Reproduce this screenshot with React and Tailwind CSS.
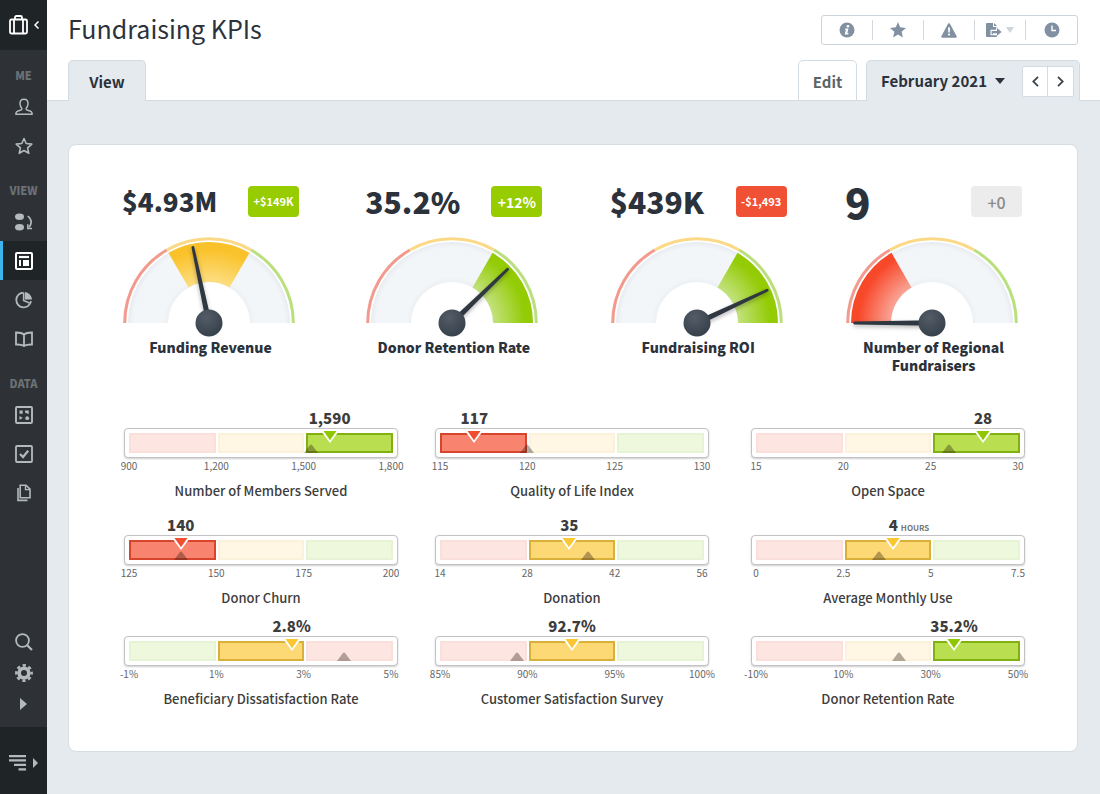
import {useId} from "react";

const gauges = [
  {
    title: "Funding Revenue",
    value: "$4.93M",
    valueSize: "text-[26px]",
    change: "+$149K",
    badge: "bg-[#96cc00] text-white text-[11px] font-bold",
    segment: 1,
    angle: 102,
  },
  {
    title: "Donor Retention Rate",
    value: "35.2%",
    valueSize: "text-[30px]",
    change: "+12%",
    badge: "bg-[#96cc00] text-white text-sm font-bold",
    segment: 2,
    angle: 44,
  },
  {
    title: "Fundraising ROI",
    value: "$439K",
    valueSize: "text-[30px]",
    change: "-$1,493",
    badge: "bg-[#f05033] text-white text-[11px] font-bold",
    segment: 2,
    angle: 25,
  },
  {
    title: "Number of Regional Fundraisers",
    value: "9",
    valueSize: "text-[42px]",
    change: "+0",
    badge: "bg-[#ececec] text-[#8a8a8a] text-base font-medium",
    segment: 0,
    angle: 180,
  },
];

// positions are percentages of the track
const bullets = [
  {title: "Number of Members Served", value: "1,590", at: 76, prev: 69, active: 2, ticks: ["900", "1,200", "1,500", "1,800"]},
  {title: "Quality of Life Index", value: "117", at: 13, prev: 33, active: 0, ticks: ["115", "120", "125", "130"]},
  {title: "Open Space", value: "28", at: 86, prev: 73, active: 2, ticks: ["15", "20", "25", "30"]},
  {title: "Donor Churn", value: "140", at: 19.6, prev: 19.6, active: 0, ticks: ["125", "150", "175", "200"]},
  {title: "Donation", value: "35", at: 49, prev: 56, active: 1, ticks: ["14", "28", "42", "56"]},
  {title: "Average Monthly Use", value: "4", unit: "HOURS", at: 52, prev: 46.6, active: 1, ticks: ["0", "2.5", "5", "7.5"]},
  {title: "Beneficiary Dissatisfaction Rate", value: "2.8%", at: 61.6, prev: 81.3, active: 1, reverse: true, ticks: ["-1%", "1%", "3%", "5%"]},
  {title: "Customer Satisfaction Survey", value: "92.7%", at: 50, prev: 29, active: 1, ticks: ["85%", "90%", "95%", "100%"]},
  {title: "Donor Retention Rate", value: "35.2%", at: 75, prev: 54, active: 2, ticks: ["-10%", "10%", "30%", "50%"]},
];

const tones = {
  red: {
    idle: "bg-[#fde6e2] border-[#fbdfdb]",
    active: "bg-[#f8836e] border-[#d6452c]",
    marker: "#f04e30",
  },
  yellow: {
    idle: "bg-[#fff6e3] border-[#fcf2dc]",
    active: "bg-[#fcd975] border-[#d8b03a]",
    marker: "#fbc62f",
  },
  green: {
    idle: "bg-[#edf8dd] border-[#e6f3d5]",
    active: "bg-[#b9de50] border-[#82b010]",
    marker: "#8fc800",
  },
};

const gaugeColors = [
  {light: "#f9a99b", full: "#f8482a", ring: "#f39a8e"},
  {light: "#fddf86", full: "#fac22a", ring: "#fbd987"},
  {light: "#c5e384", full: "#93cb04", ring: "#b9df7e"},
];

const CX = 87;
const CY = 87;

const point = (r, deg) => {
  const a = (deg * Math.PI) / 180;
  return `${(CX + r * Math.cos(a)).toFixed(2)} ${(CY - r * Math.sin(a)).toFixed(2)}`;
};

const arc = (r, from, to) => `M${point(r, from)}A${r} ${r} 0 0 1 ${point(r, to)}`;

const wedge = (r1, r2, from, to) =>
  `M${point(r2, from)}A${r2} ${r2} 0 0 1 ${point(r2, to)}L${point(r1, to)}A${r1} ${r1} 0 0 0 ${point(r1, from)}Z`;

function GaugeDial({segment, angle}) {
  const id = useId();
  const color = gaugeColors[segment];
  const from = 180 - segment * 60;

  return (
    <svg width="174" height="101" viewBox="0 0 174 101" aria-hidden="true">
      <defs>
        <radialGradient id={`${id}fill`} gradientUnits="userSpaceOnUse" cx={CX} cy={CY} r="82">
          <stop offset="0.48" stopColor={color.light} />
          <stop offset="0.9" stopColor={color.full} />
        </radialGradient>
        <radialGradient id={`${id}base`} gradientUnits="userSpaceOnUse" cx={CX} cy={CY} r="82">
          <stop offset="0.5" stopColor="#ecf0f3" />
          <stop offset="0.56" stopColor="#f2f6f9" />
          <stop offset="0.92" stopColor="#f2f6f9" />
          <stop offset="1" stopColor="#e6eaee" />
        </radialGradient>
        <radialGradient id={`${id}hub`} cx="0.4" cy="0.3" r="0.7">
          <stop offset="0" stopColor="#545d67" />
          <stop offset="1" stopColor="#37414b" />
        </radialGradient>
      </defs>
      {gaugeColors.map((c, i) => (
        <path
          key={c.full}
          d={arc(84.3, 180 - i * 60, 120 - i * 60)}
          fill="none"
          stroke={c.ring}
          strokeWidth="3"
        />
      ))}
      <path d={wedge(41, 81, 180, 0)} fill={`url(#${id}base)`} />
      <path d={wedge(41, 81, from, from - 60)} fill={`url(#${id}fill)`} />
      <g className="drop-shadow-[0_2px_2px_rgba(0,0,0,0.3)]">
        <path
          d="M87 84.2L165 85.6Q166.6 87 165 88.4L87 89.8Z"
          fill="#2f3841"
          transform={`rotate(${-angle} ${CX} ${CY})`}
        />
      </g>
      <circle cx={CX} cy={CY} r="13.5" fill={`url(#${id}hub)`} />
    </svg>
  );
}

function Gauge({title, value, valueSize, change, badge, segment, angle}) {
  return (
    <div className="w-[177px]">
      <div className="flex h-[31px] items-center justify-between">
        <span className={`pb-0.5 font-black leading-none text-[#2b323b] ${valueSize}`}>{value}</span>
        <span className={`flex h-[31px] w-[51px] items-center justify-center rounded ${badge}`}>
          {change}
        </span>
      </div>
      <div className="mt-[19px]">
        <GaugeDial segment={segment} angle={angle} />
      </div>
      <h2 className="mx-auto mt-px max-w-[160px] text-center text-sm leading-[18px] font-black text-[#2b323b]">
        <span className="-mx-1 block">{title}</span>
      </h2>
    </div>
  );
}

function Bullet({title, value, unit, at, prev, active, reverse, ticks}) {
  const order = reverse ? ["green", "yellow", "red"] : ["red", "yellow", "green"];

  return (
    <div className="w-[274px]">
      <div className="px-[5px]">
        <div className="flex w-0 justify-center" style={{marginLeft: `${at}%`}}>
          <span className="relative text-[15px] leading-[20px] font-black text-[#3d3d3d]">
            {value}
            {unit && (
              <span className="absolute bottom-0 left-full pl-[3px] text-[8px] leading-[14px] font-bold text-[#777]">
                {unit}
              </span>
            )}
          </span>
        </div>
      </div>
      <div className="rounded border border-[#c3c3c7] bg-white p-1 shadow-[0_1px_2px_rgba(0,0,0,0.2)]">
        <div className="relative grid h-5 grid-cols-3 gap-[2px]">
          {order.map((name, i) => (
            <span
              key={name}
              className={`border-2 ${i === active ? tones[name].active : tones[name].idle}`}
            />
          ))}
          <svg
            className="absolute bottom-0 -translate-x-1/2"
            style={{left: `${prev}%`}}
            width="14"
            height="9"
            aria-hidden="true"
          >
            <path d="M0 9L6 1Q7 0 8 1L14 9Z" fill="#2b1d14" fillOpacity="0.36" />
          </svg>
          <svg
            className="absolute -top-[2px] -translate-x-1/2"
            style={{left: `${at}%`}}
            width="18"
            height="12"
            aria-hidden="true"
          >
            <path d="M0 0H18L9 12Z" fill="#fff" />
            <path d="M2.5 0H15.5L9 9.3Z" fill={tones[order[active]].marker} />
          </svg>
        </div>
      </div>
      <div className="flex justify-between pr-[7px] pl-[5px]">
        {ticks.map((t) => (
          <span key={t} className="flex w-0 justify-center text-[10px] leading-[16px] text-[#666]">
            {t}
          </span>
        ))}
      </div>
      <h3 className="mt-[8px] text-center text-[13px] leading-[18px] font-medium text-[#3d3d3d]">
        {title}
      </h3>
    </div>
  );
}

const Icon = ({children, size = 18, box = 18}) => (
  <svg
    width={size}
    height={size}
    viewBox={`0 0 ${box} ${box}`}
    fill="none"
    stroke="currentColor"
    strokeWidth="1.5"
    aria-hidden="true"
  >
    {children}
  </svg>
);

const UserIcon = () => (
  <Icon>
    <path d="M1 16.2V14.8Q1.3 13.5 3 13L6 12Q7.2 11.5 6.8 10.2Q5.2 8.5 5 6Q4.7 1.2 9 1.2Q13.3 1.2 13 6Q12.8 8.5 11.2 10.2Q10.8 11.5 12 12L15 13Q16.7 13.5 17 14.8V16.2Z" />
  </Icon>
);

const StarIcon = () => (
  <Icon>
    <path d="M9 1.5L11.2 6.5L16.8 7.1L12.6 10.8L13.8 16.3L9 13.5L4.2 16.3L5.4 10.8L1.2 7.1L6.8 6.5Z" strokeWidth="1.6" strokeLinejoin="round" />
  </Icon>
);

const MetricsIcon = () => (
  <Icon>
    <g fill="currentColor" stroke="none">
      <ellipse cx="4.5" cy="3.8" rx="4.5" ry="3.2" />
      <ellipse cx="4.5" cy="14.2" rx="4.5" ry="3.2" />
    </g>
    <path d="M12.8 3Q18.8 8 14.2 14.2" strokeWidth="1.6" />
    <path d="M12.8 11.2V15.4H17" strokeWidth="1.5" />
  </Icon>
);

const DashboardIcon = () => (
  <Icon>
    <rect x="1" y="1" width="16" height="16" rx="1" strokeWidth="2" />
    <path d="M4 5H14" strokeWidth="2.2" />
    <path d="M5 8V14" strokeWidth="2" />
    <rect x="8" y="8" width="6" height="6" fill="currentColor" stroke="none" />
  </Icon>
);

const PieIcon = () => (
  <Icon>
    <path d="M8.6 1.6A7.4 7.4 0 1 0 16 10.2" strokeWidth="1.8" />
    <path d="M8.6 2V9.5L14.5 12" strokeWidth="1.5" />
    <path d="M9.8 1A8 8 0 0 1 17 8.6H9.8Z" fill="currentColor" stroke="none" />
  </Icon>
);

const BookIcon = () => (
  <Icon>
    <path d="M9 4.5Q6.5 2.4 1 2.5V14.5Q6.5 14.3 9 16Q11.5 14.3 17 14.5V2.5Q11.5 2.4 9 4.5V16" strokeWidth="1.8" />
  </Icon>
);

const DataIcon = () => (
  <Icon>
    <rect x="1" y="1" width="16" height="16" rx="1" strokeWidth="1.9" />
    <g fill="currentColor" stroke="none">
      <rect x="4.5" y="4.5" width="3.2" height="3.2" />
      <path d="M10 4.5H13.8V7.7H12.6L10 6.4Z" />
      <path d="M4.5 10L7.8 11.9L4.5 13.8Z" />
      <circle cx="12.2" cy="12.2" r="1.9" />
    </g>
  </Icon>
);

const CheckIcon = () => (
  <Icon>
    <rect x="1" y="1" width="16" height="16" rx="1" strokeWidth="1.8" />
    <path d="M5 9L8 12L13.2 5.8" strokeWidth="2.2" />
  </Icon>
);

const FilesIcon = () => (
  <Icon>
    <path d="M5.2 1.2H11L15 5.2V13.8H5.2Z" strokeWidth="1.6" />
    <path d="M10.5 1.2V5.6H15" strokeWidth="1.4" />
    <path d="M3 4V16.4H12.5" strokeWidth="1.6" />
  </Icon>
);

const SearchIcon = () => (
  <Icon>
    <circle cx="7.5" cy="7.5" r="6.4" strokeWidth="1.8" />
    <path d="M12.2 12.2L17 17" strokeWidth="2.2" />
  </Icon>
);

const GearIcon = () => (
  <Icon>
    <circle cx="9" cy="9" r="4.8" strokeWidth="3.6" />
    <circle cx="9" cy="9" r="7.6" strokeWidth="2.6" strokeDasharray="3.2 2.769" strokeDashoffset="1.6" />
  </Icon>
);

const CaretRight = () => (
  <svg width="7" height="12" viewBox="0 0 7 12" fill="currentColor" aria-hidden="true">
    <path d="M0 0L7 6L0 12Z" />
  </svg>
);

const navSections = [
  {
    label: "ME",
    items: [
      {name: "Profile", icon: UserIcon},
      {name: "Favorites", icon: StarIcon},
    ],
  },
  {
    label: "VIEW",
    items: [
      {name: "Metrics", icon: MetricsIcon},
      {name: "Dashboards", icon: DashboardIcon, active: true},
      {name: "Charts", icon: PieIcon},
      {name: "Reports", icon: BookIcon},
    ],
  },
  {
    label: "DATA",
    items: [
      {name: "Datasets", icon: DataIcon},
      {name: "Tasks", icon: CheckIcon},
      {name: "Files", icon: FilesIcon},
    ],
  },
];

function Sidebar() {
  return (
    <nav className="flex w-[47px] shrink-0 flex-col bg-[#2e3236] text-[#b4b9bd]">
      <button aria-label="Switch workspace" className="flex h-[50px] items-center justify-center gap-[6px] bg-[#1f2427] text-white">
        <svg width="19" height="20" viewBox="0 0 19 20" fill="none" stroke="currentColor" strokeWidth="1.8" aria-hidden="true">
          <rect x="1" y="4.5" width="17" height="14" rx="1.5" />
          <path d="M6 4.5V2.5Q6 1 7.5 1H11.5Q13 1 13 2.5V4.5M5 4.5V18.5M14 4.5V18.5" />
        </svg>
        <svg width="5" height="8" viewBox="0 0 5 8" fill="none" stroke="currentColor" strokeWidth="1.5" aria-hidden="true">
          <path d="M4.5 0.5L1 4L4.5 7.5" />
        </svg>
      </button>

      {navSections.map((section) => (
        <div key={section.label}>
          <p className="h-[37px] pt-[15px] text-center text-[11px] leading-[20px] font-black text-[#6c7175]">
            {section.label}
          </p>
          {section.items.map(({name, icon: ItemIcon, active}) => (
            <a
              key={name}
              href="#"
              aria-label={name}
              className={`flex h-[39px] items-center justify-center border-x-3 border-r-transparent ${
                active ? "border-l-[#3db4ea] bg-[#1f2427] text-white" : "border-l-transparent"
              }`}
            >
              <ItemIcon />
            </a>
          ))}
        </div>
      ))}

      <div className="mt-auto pb-2">
        <button aria-label="Search" className="flex h-[31px] w-full items-center justify-center">
          <SearchIcon />
        </button>
        <button aria-label="Settings" className="flex h-[31px] w-full items-center justify-center">
          <GearIcon />
        </button>
        <button aria-label="More" className="flex h-[31px] w-full items-center justify-center">
          <CaretRight />
        </button>
      </div>

      <button aria-label="Expand menu" className="flex h-[67px] items-center justify-center gap-[7px] bg-[#1f2427] pt-1">
        <svg width="17" height="16" viewBox="0 0 17 16" fill="currentColor" aria-hidden="true">
          <path d="M0 0H17V2.2H0ZM0 4.3H17V6.5H0ZM5 8.8H17V11H5ZM9.5 13.2H17V15.4H9.5Z" />
        </svg>
        <svg width="5" height="10" viewBox="0 0 5 10" fill="currentColor" aria-hidden="true">
          <path d="M0 0L5 5L0 10Z" />
        </svg>
      </button>
    </nav>
  );
}

const toolbarButton = "flex h-5 w-[51px] items-center justify-center gap-1";

function Toolbar() {
  return (
    <div className="flex h-[30px] items-center divide-x divide-[#d3d9df] rounded-[3px] border border-[#ccd4dc] text-[#8291a1]">
      <button aria-label="Info" className={toolbarButton}>
        <svg width="16" height="16" viewBox="0 0 16 16" aria-hidden="true">
          <circle cx="8" cy="8" r="7.5" fill="currentColor" />
          <circle cx="8.9" cy="4.2" r="1.3" fill="#fff" />
          <path d="M6.3 6.6H9.5L8.3 11.3H9.6L9.3 12.4H5.7L6.9 7.7H6Z" fill="#fff" />
        </svg>
      </button>
      <button aria-label="Favorite" className={toolbarButton}>
        <svg width="16" height="16" viewBox="0 0 16 16" fill="currentColor" aria-hidden="true">
          <path d="M8 0L10.2 5.3L16 5.9L11.6 9.7L12.9 15.6L8 12.5L3.1 15.6L4.4 9.7L0 5.9L5.8 5.3Z" />
        </svg>
      </button>
      <button aria-label="Alerts" className={toolbarButton}>
        <svg width="16" height="15" viewBox="0 0 16 15" aria-hidden="true">
          <path d="M7.2 0.6Q8 -0.3 8.8 0.6L15.8 13.5Q16 14.6 15 14.7H1Q0 14.6 0.2 13.5Z" fill="currentColor" />
          <path d="M7 4.5H9L8.7 9.5H7.3Z" fill="#fff" />
          <circle cx="8" cy="11.5" r="1.1" fill="#fff" />
        </svg>
      </button>
      <button aria-label="Export" className={toolbarButton}>
        <svg width="16" height="14" viewBox="0 0 16 14" aria-hidden="true">
          <path d="M1 0H7V4H11V13Q11 14 10 14H1Q0 14 0 13V1Q0 0 1 0Z" fill="currentColor" />
          <path d="M8 0L11 3H8Z" fill="currentColor" />
          <path d="M4.5 6.8H10V4.6H11.5V12.2H4.5Z" fill="#fff" />
          <path d="M5.6 11.2V8H11V5L15.6 9L11 12.8V10.2H7V11.2Z" fill="currentColor" />
        </svg>
        <svg width="8" height="6" viewBox="0 0 8 6" fill="#cdd4da" aria-hidden="true">
          <path d="M0 0H8L4 6Z" />
        </svg>
      </button>
      <button aria-label="History" className={toolbarButton}>
        <svg width="16" height="16" viewBox="0 0 16 16" fill="none" aria-hidden="true">
          <circle cx="8" cy="8" r="7.5" fill="currentColor" />
          <path d="M8 3.5V8.5H12" stroke="#fff" strokeWidth="1.4" />
        </svg>
      </button>
    </div>
  );
}

function Header() {
  return (
    <header className="border-b border-[#d3dbe2] bg-white pr-5 pl-[21px]">
      <div className="flex h-[60px] items-center justify-between pr-[2px]">
        <h1 className="pb-1 text-[25px] leading-8 text-[#2b323b]">Fundraising KPIs</h1>
        <Toolbar />
      </div>
      <div className="-mb-px flex items-end">
        <a
          href="#"
          className="flex h-[41px] w-[78px] items-center justify-center rounded-t-[5px] border border-b-0 border-[#d3dbe2] bg-[#e5eaee] pt-[2px] text-[15px] font-bold text-[#2b323b]"
        >
          View
        </a>
        <a
          href="#"
          className="ml-auto flex h-[41px] w-[59px] items-center justify-center rounded-t-[5px] border border-[#d3dbe2] bg-white pt-[3px] text-[15px] font-bold text-[#5d6468]"
        >
          Edit
        </a>
        <div className="ml-[9px] flex h-[41px] items-center rounded-t-[5px] border border-b-0 border-[#d3dbe2] bg-[#e5eaee] pr-[5px] pl-[14px]">
          <div className="relative flex items-center text-[15px] font-bold text-[#2b323b]">
            <select
              aria-label="Period"
              className="h-10 appearance-none pr-[35px]"
              defaultValue="feb"
            >
              <option value="feb">February 2021</option>
            </select>
            <svg
              className="pointer-events-none absolute right-[17px]"
              width="10"
              height="6"
              viewBox="0 0 10 6"
              fill="currentColor"
              aria-hidden="true"
            >
              <path d="M0 0H10L5 6Z" />
            </svg>
          </div>
          <div className="flex divide-x divide-[#d3dbe2] rounded-[2px] border border-[#d3dbe2] bg-white text-[#3f474e]">
            <button aria-label="Previous month" className="flex h-[29px] w-[25px] items-center justify-center">
              <svg width="7" height="11" viewBox="0 0 7 11" fill="none" stroke="currentColor" strokeWidth="1.8" aria-hidden="true">
                <path d="M6 0.8L1.3 5.5L6 10.2" />
              </svg>
            </button>
            <button aria-label="Next month" className="flex h-[29px] w-[25px] items-center justify-center">
              <svg width="7" height="11" viewBox="0 0 7 11" fill="none" stroke="currentColor" strokeWidth="1.8" aria-hidden="true">
                <path d="M1 0.8L5.7 5.5L1 10.2" />
              </svg>
            </button>
          </div>
        </div>
      </div>
    </header>
  );
}

export default function App() {
  return (
    <div className="flex min-h-screen bg-[#e5eaee] font-['Noto_Sans_CJK_JP','Noto_Sans',sans-serif]">
      <Sidebar />
      <div className="flex min-w-0 flex-1 flex-col">
        <Header />
        <main className="pt-[43px] pr-[22px] pb-[42px] pl-[21px]">
          <section className="rounded-lg border border-[#d6dde3] bg-white pt-[41px] pr-[52px] pb-[43px] pl-[53px]">
            <div className="grid grid-cols-[243fr_244fr_235fr_177px] pr-[3px]">
              {gauges.map((g) => (
                <Gauge key={g.title} {...g} />
              ))}
            </div>
            <div className="mt-[34px] grid grid-cols-[311fr_316fr_274px] grid-rows-[107px_101px_auto] pl-[2px]">
              {bullets.map((b) => (
                <Bullet key={b.title + b.value} {...b} />
              ))}
            </div>
          </section>
        </main>
      </div>
    </div>
  );
}
